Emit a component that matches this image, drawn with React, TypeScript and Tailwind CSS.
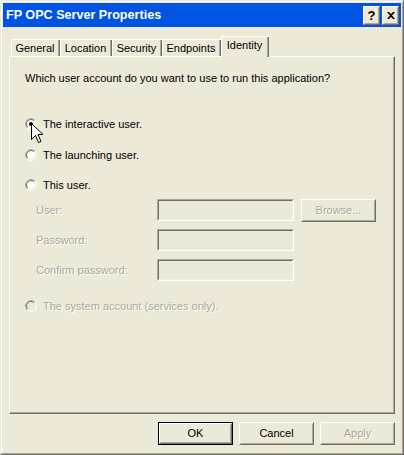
import React from "react";

const font = "font-['Liberation_Sans',Arial,sans-serif] text-[11px] leading-[13px]";
const dim = "text-[#ACA899] [text-shadow:1px_1px_0_#ffffff]";

function Radio({ checked, disabled }: { checked?: boolean; disabled?: boolean }) {
  const arc = (r: number) => {
    const d = r * 0.7071;
    return {
      tl: `M ${6 - d} ${6 + d} A ${r} ${r} 0 0 1 ${6 + d} ${6 - d}`,
      br: `M ${6 + d} ${6 - d} A ${r} ${r} 0 0 1 ${6 - d} ${6 + d}`,
    };
  };
  const o = arc(5.5);
  const i = arc(4.5);
  return (
    <svg width="12" height="12" viewBox="0 0 12 12" className="shrink-0">
      <circle cx="6" cy="6" r="4" fill={disabled ? "#ECE9D8" : "#ffffff"} />
      <path d={o.tl} stroke="#ACA899" strokeWidth="1" fill="none" />
      <path d={o.br} stroke="#ffffff" strokeWidth="1" fill="none" />
      <path d={i.tl} stroke="#716F64" strokeWidth="1" fill="none" />
      <path d={i.br} stroke="#F1EFE2" strokeWidth="1" fill="none" />
      {checked && <circle cx="6" cy="6" r="2" fill="#000000" />}
    </svg>
  );
}

function Button({ label, def, disabled, w = "w-[75px]" }: { label: string; def?: boolean; disabled?: boolean; w?: string }) {
  const bevel = (
    <div className="flex-1 border border-t-white border-l-white border-r-[#716F64] border-b-[#716F64] flex">
      <div className="flex-1 border border-t-[#ECE9D8] border-l-[#ECE9D8] border-r-[#ACA899] border-b-[#ACA899] flex items-center justify-center">
        <span className={disabled ? dim : "text-black"}>{label}</span>
      </div>
    </div>
  );
  return (
    <div className={`${w} h-[23px] shrink-0 flex ${def ? "border border-black" : ""}`}>{bevel}</div>
  );
}

function Field() {
  return (
    <div className="w-[137px] h-[22px] shrink-0 flex border border-t-[#ACA899] border-l-[#ACA899] border-r-white border-b-white">
      <div className="flex-1 border border-t-[#716F64] border-l-[#716F64] border-r-[#F1EFE2] border-b-[#F1EFE2] bg-[#ECE9D8]" />
    </div>
  );
}

function Tab({ label, w, active }: { label: string; w: string; active?: boolean }) {
  if (active) {
    return (
      <div className={`${w} h-[21px] -mb-px relative z-10 bg-[#ECE9D8] border-t border-l border-t-white border-l-white flex`}>
        <div className="flex-1 flex items-start justify-center pt-[2px] text-black">{label}</div>
        <div className="w-[2px] flex">
          <div className="w-px bg-[#ACA899]" />
          <div className="w-px bg-[#716F64]" />
        </div>
      </div>
    );
  }
  return (
    <div className={`${w} h-[17px] bg-[#ECE9D8] border-t border-l border-t-white border-l-white flex`}>
      <div className="flex-1 flex items-center justify-center text-black pt-px">{label}</div>
      <div className="w-[2px] flex">
        <div className="w-px bg-[#ACA899]" />
        <div className="w-px bg-[#716F64]" />
      </div>
    </div>
  );
}

function Cursor() {
  return (
    <svg width="13" height="21" viewBox="0 0 13 21" className="absolute left-[30px] top-[122px]">
      <path
        d="M0.5 0.5 L0.5 16.5 L4.5 12.5 L7.5 19.5 L10 18.5 L7 11.5 L12 11.5 Z"
        fill="#ffffff"
        stroke="#000000"
        strokeWidth="1"
        strokeLinejoin="miter"
      />
    </svg>
  );
}

export default function App() {
  return (
    <div className={`relative w-[404px] h-[455px] ${font} border border-t-[#ECE9D8] border-l-[#ECE9D8] border-r-[#716F64] border-b-[#716F64] flex`}>
      <div className="flex-1 border border-t-white border-l-white border-r-[#ACA899] border-b-[#ACA899] bg-[#ECE9D8] p-px flex flex-col">
        {/* Title bar */}
        <div className="h-[24px] bg-[#0054E3] flex items-center pl-[3px] pr-[2px]">
          <span className="flex-1 text-white font-bold text-[12.6px]">FP OPC Server Properties</span>
          <div className="flex gap-[2px]">
            <div className="w-[17px] h-[19px] flex border border-t-white border-l-white border-r-[#716F64] border-b-[#716F64]">
              <div className="flex-1 bg-[#ECE9D8] border border-t-[#ECE9D8] border-l-[#ECE9D8] border-r-[#ACA899] border-b-[#ACA899] flex items-center justify-center font-bold text-[13px] text-black">
                ?
              </div>
            </div>
            <div className="w-[17px] h-[19px] flex border border-t-white border-l-white border-r-[#716F64] border-b-[#716F64]">
              <div className="flex-1 bg-[#ECE9D8] border border-t-[#ECE9D8] border-l-[#ECE9D8] border-r-[#ACA899] border-b-[#ACA899] flex items-center justify-center">
                <svg width="8" height="7" viewBox="0 0 8 7">
                  <path d="M0 0h2l2 2 2-2h2L5 3.5 8 7H6L4 5 2 7H0l3-3.5z" fill="#000" />
                </svg>
              </div>
            </div>
          </div>
        </div>

        {/* Body */}
        <div className="flex-1 flex flex-col px-[6px] pt-[9px]">
          <div className="h-[20px] flex items-end pl-[2px] relative">
            <Tab label="General" w="w-[49px]" />
            <Tab label="Location" w="w-[52px]" />
            <Tab label="Security" w="w-[50px]" />
            <Tab label="Endpoints" w="w-[59px]" />
            <Tab label="Identity" w="w-[48px]" active />
          </div>

          <div className="h-[358px] border border-t-white border-l-white border-r-[#716F64] border-b-[#716F64] flex">
            <div className="flex-1 border-r border-b border-r-[#ACA899] border-b-[#ACA899] flex flex-col pl-[15px]">
              <div className="mt-[14px] h-[14px] flex items-center text-black">
                Which user account do you want to use to run this application?
              </div>

              <div className="mt-[28px] h-[22px] flex items-center gap-[6px] text-black">
                <Radio checked />
                <span>The interactive user.</span>
              </div>
              <div className="mt-[9px] h-[22px] flex items-center gap-[6px] text-black">
                <Radio />
                <span>The launching user.</span>
              </div>
              <div className="mt-[8px] h-[22px] flex items-center gap-[6px] text-black">
                <Radio />
                <span>This user.</span>
              </div>

              <div className="mt-[3px] h-[22px] flex items-center pl-[11px]">
                <span className={`w-[121px] ${dim}`}>User:</span>
                <Field />
                <div className="ml-[7px]">
                  <Button label="Browse..." disabled />
                </div>
              </div>
              <div className="mt-[8px] h-[22px] flex items-center pl-[11px]">
                <span className={`w-[121px] ${dim}`}>Password:</span>
                <Field />
              </div>
              <div className="mt-[8px] h-[22px] flex items-center pl-[11px]">
                <span className={`w-[121px] ${dim}`}>Confirm password:</span>
                <Field />
              </div>

              <div className="mt-[14px] h-[22px] flex items-center gap-[6px]">
                <Radio disabled />
                <span className={dim}>The system account (services only).</span>
              </div>
            </div>
          </div>

          <div className="mt-[8px] flex justify-end gap-[6px]">
            <Button label="OK" def />
            <Button label="Cancel" />
            <Button label="Apply" disabled />
          </div>
        </div>
      </div>
      <Cursor />
    </div>
  );
}
